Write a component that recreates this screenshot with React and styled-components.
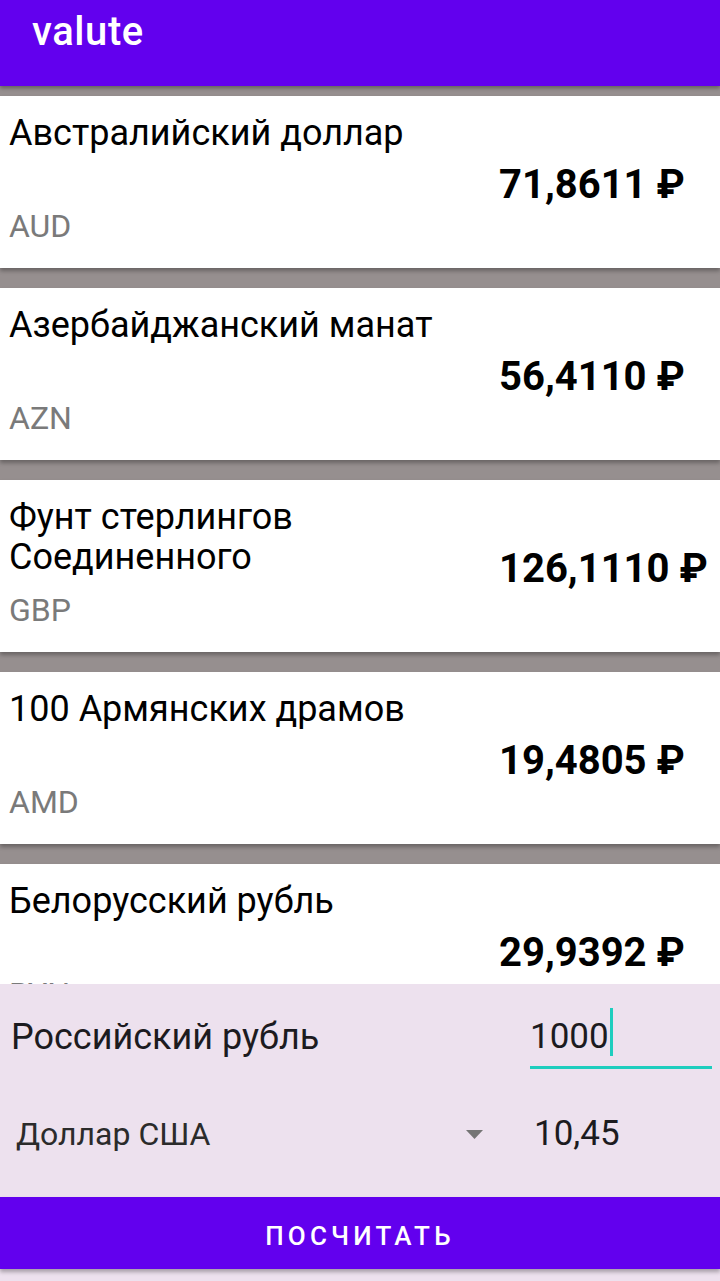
import React from 'react';
import styled, { createGlobalStyle } from 'styled-components';

const GlobalStyle = createGlobalStyle`
  html, body {
    margin: 0;
    padding: 0;
  }
  body {
    font-family: Roboto, "Noto Sans", sans-serif;
  }
  #root {
    height: 1281px;
  }
`;

const Screen = styled.div`
  display: flex;
  flex-direction: column;
  width: 720px;
  height: 1281px;
  overflow: hidden;
  background: #968f8f;
`;

const Toolbar = styled.div`
  height: 86px;
  flex: 0 0 86px;
  box-sizing: border-box;
  padding: 14px 0 0 32px;
  background: #6200ee;
  box-shadow: 0 2px 4px rgba(0, 0, 0, 0.35);
  position: relative;
  z-index: 2;
`;

const Title = styled.div`
  color: #fff;
  font-size: 40px;
  line-height: 35px;
  font-weight: 500;
  letter-spacing: 0.6px;
`;

const List = styled.div`
  flex: 1;
  overflow: hidden;
  display: flex;
  flex-direction: column;
  gap: 20px;
  padding-top: 10px;
`;

const Card = styled.div`
  flex: 0 0 172px;
  height: 172px;
  box-sizing: border-box;
  display: flex;
  align-items: center;
  padding: 0 0 0 9px;
  background: #fff;
  box-shadow: 0 3px 4px rgba(0, 0, 0, 0.3);
`;

const Info = styled.div`
  flex: 0 0 460px;
  align-self: stretch;
  display: flex;
  flex-direction: column;
  padding-top: 17px;
`;

const Name = styled.div`
  height: 80px;
  font-size: 36px;
  line-height: 40px;
  color: #000;
  overflow: hidden;
`;

const Code = styled.div`
  margin-top: 16px;
  font-size: 32px;
  line-height: 35px;
  color: #7a7a7a;
`;

const Rate = styled.div`
  flex: 1;
  padding-left: 30px;
  white-space: nowrap;
  font-size: 40px;
  font-weight: 700;
  color: #000;
  padding-top: 4px;
`;

const Panel = styled.div`
  flex: 0 0 297px;
  display: flex;
  flex-direction: column;
  background: #ede1ee;
  position: relative;
  z-index: 3;
`;

const Row = styled.div`
  display: flex;
  align-items: flex-start;
  height: ${(p) => p.h}px;
  box-sizing: border-box;
  padding: ${(p) => p.pt}px 8px 0 11px;
`;

const Label = styled.div`
  flex: 1;
  font-size: 36px;
  line-height: 40px;
  color: #1c1b1f;
`;

const Field = styled.div`
  width: 182px;
  display: flex;
  align-items: flex-start;
  padding-bottom: 9px;
  border-bottom: 3px solid #1ecdbe;
`;

const FieldText = styled.span`
  font-size: 35px;
  line-height: 40px;
  color: #1c1b1f;
`;

const Caret = styled.span`
  display: block;
  width: 3px;
  height: 48px;
  margin: -9px 0 -1px 1px;
  background: #1ecdbe;
`;

const Spinner = styled.div`
  flex: 1;
  display: flex;
  align-items: center;
  padding-left: 5px;
  padding-right: 47px;
`;

const SpinnerText = styled.div`
  flex: 1;
  font-size: 32px;
  line-height: 40px;
  color: #2b2b2b;
`;

const Result = styled.div`
  width: 178px;
  padding-left: 4px;
  font-size: 35px;
  line-height: 40px;
  color: #1c1b1f;
`;

const Button = styled.button`
  height: 72px;
  flex: 0 0 72px;
  border: none;
  margin: 0;
  padding: 5px 0 0;
  background: #6200ee;
  color: #fff;
  font-family: Roboto, sans-serif;
  font-size: 26px;
  font-weight: 500;
  letter-spacing: 4.2px;
  box-shadow: 0 3px 4px rgba(0, 0, 0, 0.3);
`;

const rates = [
  { name: 'Австралийский доллар', code: 'AUD', value: '71,8611' },
  { name: 'Азербайджанский манат', code: 'AZN', value: '56,4110' },
  { name: 'Фунт стерлингов Соединенного', code: 'GBP', value: '126,1110' },
  { name: '100 Армянских драмов', code: 'AMD', value: '19,4805' },
  { name: 'Белорусский рубль', code: 'BYN', value: '29,9392' },
];

const Arrow = () => (
  <svg width="17" height="9" viewBox="0 0 17 9">
    <path d="M0 0 L17 0 L8.5 9 Z" fill="#757575" />
  </svg>
);

export default function App() {
  return (
    <>
      <GlobalStyle />
      <Screen>
        <Toolbar>
          <Title>valute</Title>
        </Toolbar>
        <List>
          {rates.map((r) => (
            <Card key={r.code}>
              <Info>
                <Name>{r.name}</Name>
                <Code>{r.code}</Code>
              </Info>
              <Rate>{r.value} ₽</Rate>
            </Card>
          ))}
        </List>
        <Panel>
          <Row h={98} pt={33}>
            <Label>Российский рубль</Label>
            <Field>
              <FieldText>1000</FieldText>
              <Caret />
            </Field>
          </Row>
          <Row h={115} pt={32}>
            <Spinner>
              <SpinnerText>Доллар США</SpinnerText>
              <Arrow />
            </Spinner>
            <Result>10,45</Result>
          </Row>
          <Button>ПОСЧИТАТЬ</Button>
        </Panel>
      </Screen>
    </>
  );
}
